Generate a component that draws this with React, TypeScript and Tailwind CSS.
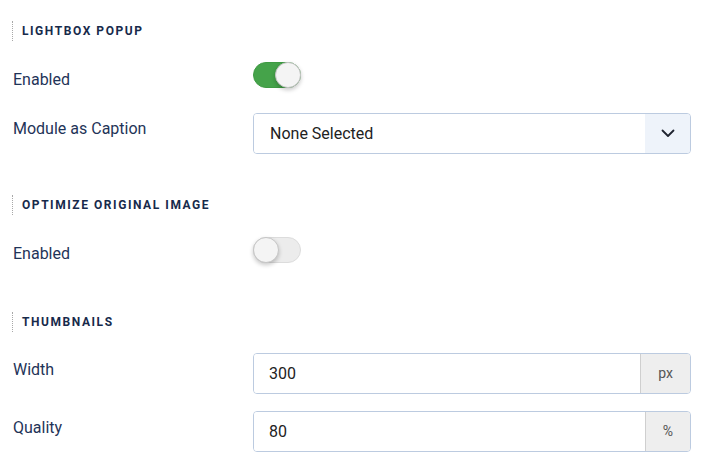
import React from 'react';

const Heading = ({ title, className = '' }: { title: string; className?: string }) => (
    <div className={`ml-[12px] flex h-[20px] items-center border-l border-dotted border-[#a8a8a8] pl-[9px] ${className}`}>
        <span className="text-[12px] font-bold uppercase tracking-[0.13em] text-[#172a4b]">{title}</span>
    </div>
);

const Label = ({ children, pt }: { children: React.ReactNode; pt: string }) => (
    <div className={`w-[240px] shrink-0 text-[16px] leading-[22px] text-[#1f3458] ${pt}`}>{children}</div>
);

const Toggle = ({ on }: { on: boolean }) => (
    <div
        className={`relative h-[26px] w-[48px] rounded-full border ${
            on ? 'border-[#3f9a43] bg-[#45a34a]' : 'border-[#dcdcdc] bg-[#ececec]'
        }`}
    >
        <div
            className={`absolute top-[-1px] h-[26px] w-[26px] rounded-full border border-[#c6c6c6] bg-[#f4f4f4] shadow-[0_2px_4px_rgba(0,0,0,0.22)] ${
                on ? 'right-[-1px]' : 'left-[-1px]'
            }`}
        />
    </div>
);

const AddonInput = ({ value, unit, addonW }: { value: string; unit: string; addonW: string }) => (
    <div className="flex h-[41px] flex-1 overflow-hidden rounded-[4px] border border-[#bccbe0]">
        <div className="flex flex-1 items-center bg-white pl-[15px] text-[16px] text-[#222]">{value}</div>
        <div className={`flex ${addonW} items-center justify-center border-l border-[#cfcfcf] bg-[#eeeeee] text-[14px] text-[#555]`}>
            {unit}
        </div>
    </div>
);

export default function App() {
    return (
        <div className="min-h-[468px] w-[703px] bg-white pt-[21px] pr-[12px] font-['Roboto',sans-serif]">
            <Heading title="Lightbox Popup" />

            <div className="mt-[21px] flex h-[26px] items-start pl-[13px]">
                <Label pt="pt-[7px]">Enabled</Label>
                <Toggle on />
            </div>

            <div className="mt-[25px] flex h-[41px] items-start pl-[13px]">
                <Label pt="pt-[5px]">Module as Caption</Label>
                <div className="flex h-[41px] flex-1 overflow-hidden rounded-[4px] border border-[#bccbe0]">
                    <div className="flex flex-1 items-center bg-white pl-[16px] text-[16px] text-[#222]">None Selected</div>
                    <div className="flex w-[45px] items-center justify-center bg-[#eef3fa]">
                        <svg width="14" height="9" viewBox="0 0 14 9" fill="none">
                            <path d="M1.5 1.5 7 7l5.5-5.5" stroke="#1f2430" strokeWidth="1.8" strokeLinecap="round" strokeLinejoin="round" />
                        </svg>
                    </div>
                </div>
            </div>

            <Heading title="Optimize Original Image" className="mt-[41px]" />

            <div className="mt-[22px] flex h-[26px] items-start pl-[13px]">
                <Label pt="pt-[6px]">Enabled</Label>
                <Toggle on={false} />
            </div>

            <Heading title="Thumbnails" className="mt-[49px]" />

            <div className="mt-[21px] flex h-[41px] items-start pl-[13px]">
                <Label pt="pt-[6px]">Width</Label>
                <AddonInput value="300" unit="px" addonW="w-[50px]" />
            </div>

            <div className="mt-[17px] flex h-[41px] items-start pl-[13px]">
                <Label pt="pt-[6px]">Quality</Label>
                <AddonInput value="80" unit="%" addonW="w-[45px]" />
            </div>
        </div>
    );
}
